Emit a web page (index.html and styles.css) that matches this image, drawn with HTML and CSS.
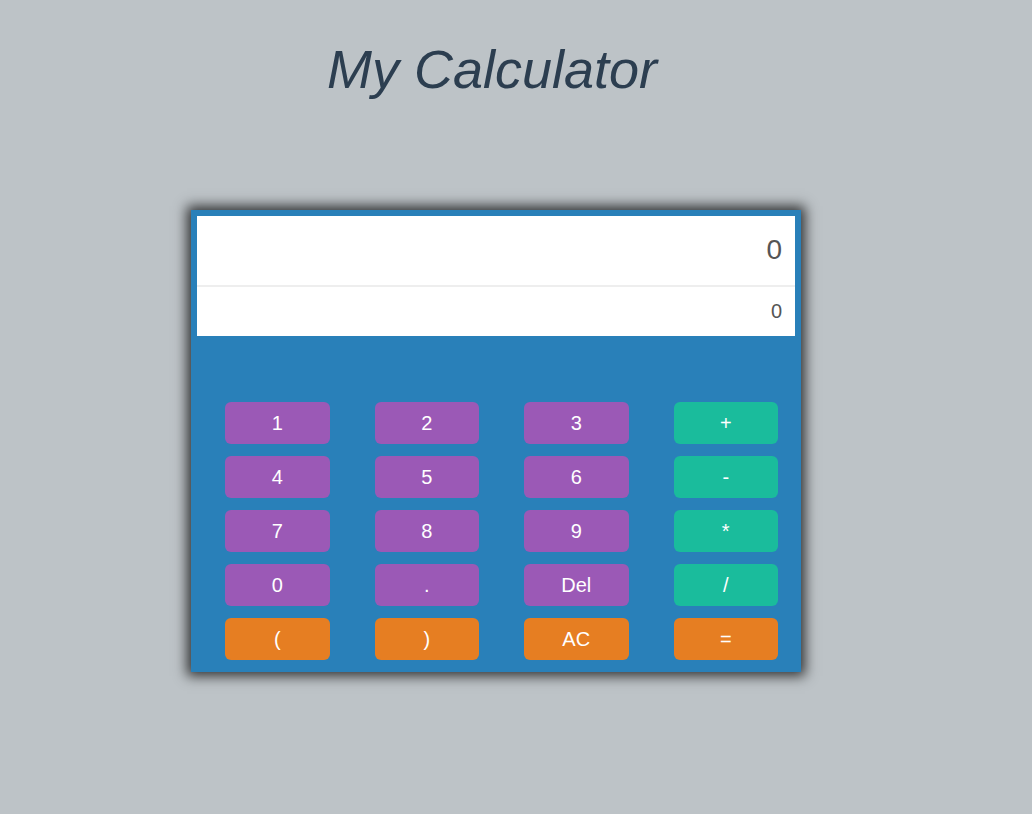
FILE: index.html
```html
<!DOCTYPE html>
<html>
<head>
<meta charset="utf-8">
<title>My Calculator</title>
<link rel="stylesheet" href="styles.css">
</head>
<body>
<div class="page">
  <h1 class="title">My Calculator</h1>
  <div class="calc">
    <div class="display">
      <div class="result">0</div>
      <div class="expr">0</div>
    </div>
    <div class="keys">
      <button class="key num">1</button>
      <button class="key num">2</button>
      <button class="key num">3</button>
      <button class="key op">+</button>
      <button class="key num">4</button>
      <button class="key num">5</button>
      <button class="key num">6</button>
      <button class="key op">-</button>
      <button class="key num">7</button>
      <button class="key num">8</button>
      <button class="key num">9</button>
      <button class="key op">*</button>
      <button class="key num">0</button>
      <button class="key num">.</button>
      <button class="key num">Del</button>
      <button class="key op">/</button>
      <button class="key fn">(</button>
      <button class="key fn">)</button>
      <button class="key fn">AC</button>
      <button class="key fn">=</button>
    </div>
  </div>
</div>
</body>
</html>
```
FILE: styles.css
```css
html, body {
  margin: 0;
  padding: 0;
  background: #bdc3c7;
  height: 100%;
}
body {
  font-family: "Liberation Sans", Arial, sans-serif;
}
.page {
  width: 992px;
  display: flex;
  flex-direction: column;
  align-items: center;
  padding-top: 38px;
}
.title {
  margin: 0;
  font-size: 54px;
  font-style: italic;
  font-weight: normal;
  line-height: 62px;
  color: #2c3e50;
  padding-right: 8px;
}
.calc {
  margin-top: 110px;
  width: 598px;
  padding: 6px;
  background: #2980b9;
  box-shadow: 0 0 12px 4px rgba(0, 0, 0, 0.75);
}
.display {
  background: #fff;
  display: flex;
  flex-direction: column;
}
.result {
  box-sizing: border-box;
  height: 71px;
  border-bottom: 2px solid #eeeeee;
  text-align: right;
  padding-right: 13px;
  font-size: 28px;
  line-height: 68px;
  color: #555;
}
.expr {
  height: 49px;
  text-align: right;
  padding-right: 13px;
  font-size: 20px;
  line-height: 48px;
  color: #555;
}
.keys {
  display: grid;
  grid-template-columns: repeat(4, 104.5px);
  grid-auto-rows: 42px;
  column-gap: 45px;
  row-gap: 12px;
  padding: 66px 17px 6px 28px;
}
.key {
  border: none;
  border-radius: 6px;
  color: #fff;
  font-family: "Liberation Sans", Arial, sans-serif;
  font-size: 20px;
  padding: 0;
  margin: 0;
}
.num { background: #9b59b6; }
.op { background: #1abc9c; }
.fn { background: #e67e22; }
```
